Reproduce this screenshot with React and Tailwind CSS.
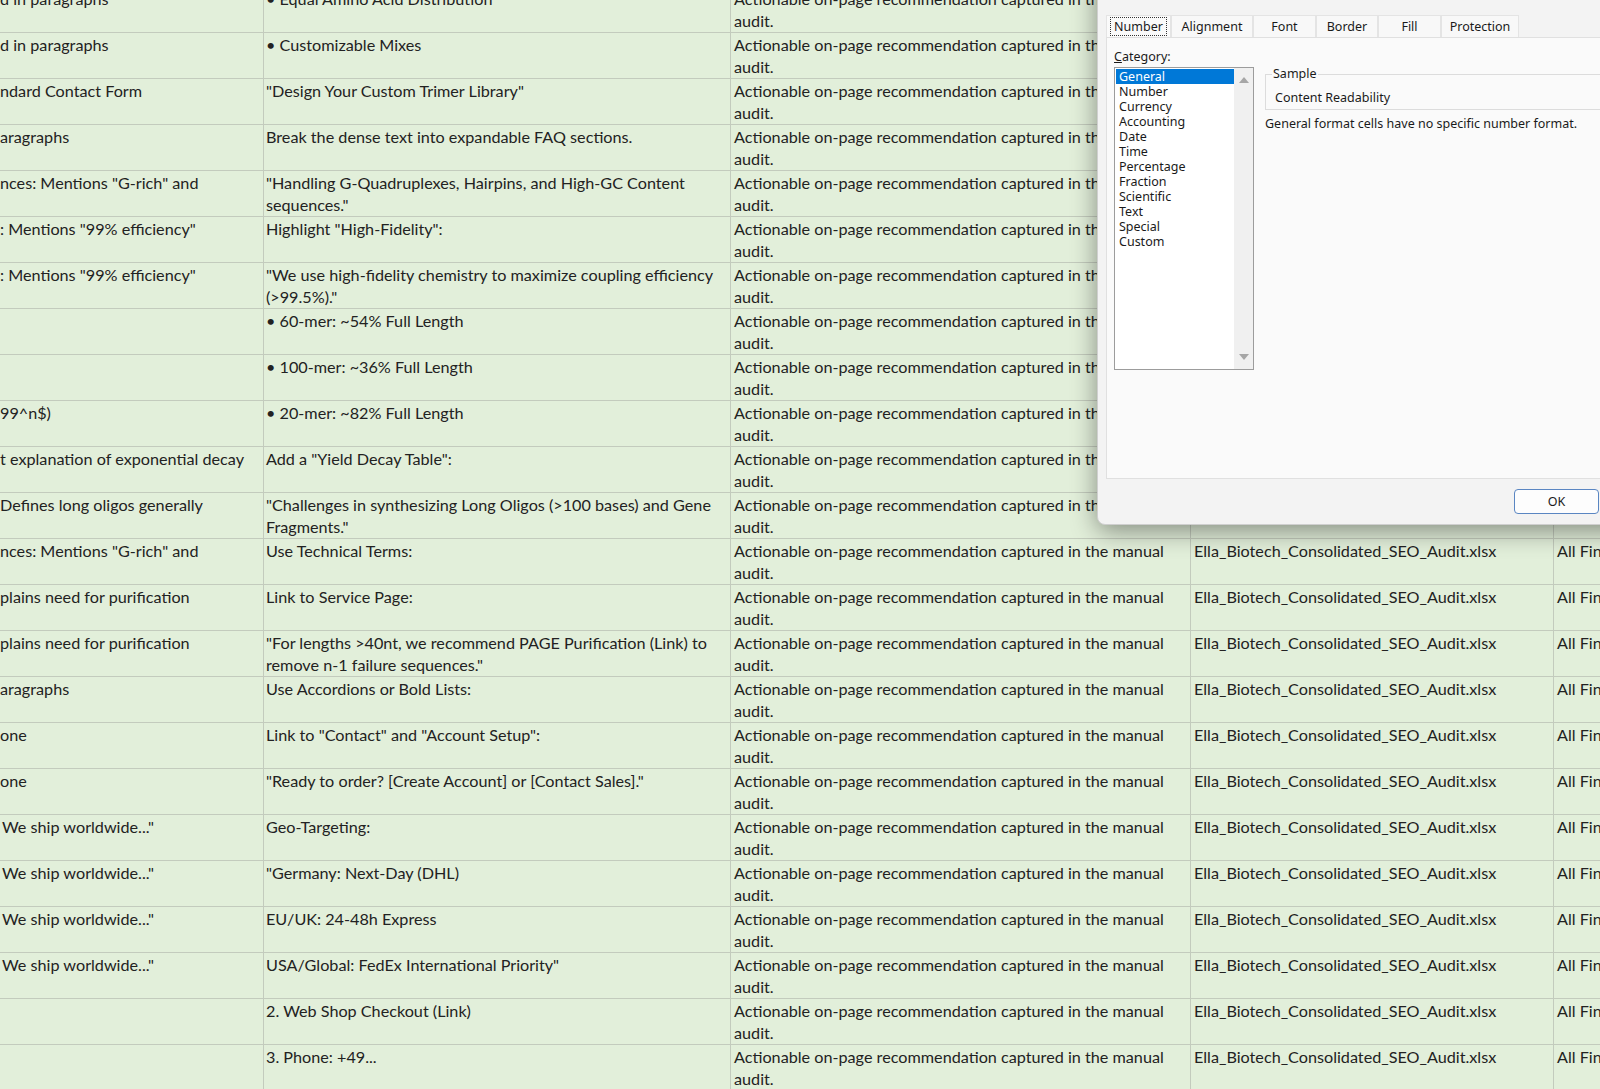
import React from "react";

const C_TEXT = ["Actionable on-page recommendation captured in the manual", "audit."];
const D_TEXT = "Ella_Biotech_Consolidated_SEO_Audit.xlsx";
const E_TEXT = "All Findings";

const rows = [
  { a: "d in paragraphs", b: ["• Equal Amino Acid Distribution"] },
  { a: "d in paragraphs", b: ["• Customizable Mixes"] },
  { a: "ndard Contact Form", b: ['"Design Your Custom Trimer Library"'] },
  { a: "aragraphs", b: ["Break the dense text into expandable FAQ sections."] },
  { a: 'nces: Mentions "G-rich" and', b: ['"Handling G-Quadruplexes, Hairpins, and High-GC Content', 'sequences."'] },
  { a: ': Mentions "99% efficiency"', b: ['Highlight "High-Fidelity":'] },
  { a: ': Mentions "99% efficiency"', b: ['"We use high-fidelity chemistry to maximize coupling efficiency', '(>99.5%)."'] },
  { a: "", b: ["• 60-mer: ~54% Full Length"] },
  { a: "", b: ["• 100-mer: ~36% Full Length"] },
  { a: "99^n$)", b: ["• 20-mer: ~82% Full Length"] },
  { a: "t explanation of exponential decay", b: ['Add a "Yield Decay Table":'] },
  { a: "Defines long oligos generally", b: ['"Challenges in synthesizing Long Oligos (>100 bases) and Gene', 'Fragments."'] },
  { a: 'nces: Mentions "G-rich" and', b: ["Use Technical Terms:"] },
  { a: "plains need for purification", b: ["Link to Service Page:"] },
  { a: "plains need for purification", b: ['"For lengths >40nt, we recommend PAGE Purification (Link) to', 'remove n-1 failure sequences."'] },
  { a: "aragraphs", b: ["Use Accordions or Bold Lists:"] },
  { a: "one", b: ['Link to "Contact" and "Account Setup":'] },
  { a: "one", b: ['"Ready to order? [Create Account] or [Contact Sales]."'] },
  { a: 'We ship worldwide..."', b: ["Geo-Targeting:"], ap: true },
  { a: 'We ship worldwide..."', b: ['"Germany: Next-Day (DHL)'], ap: true },
  { a: 'We ship worldwide..."', b: ["EU/UK: 24-48h Express"], ap: true },
  { a: 'We ship worldwide..."', b: ['USA/Global: FedEx International Priority"'], ap: true },
  { a: "", b: ["2. Web Shop Checkout (Link)"] },
  { a: "", b: ["3. Phone: +49..."] },
];

const categories = [
  "General", "Number", "Currency", "Accounting", "Date", "Time",
  "Percentage", "Fraction", "Scientific", "Text", "Special", "Custom",
];

const tabs = [
  { label: "Number", w: "w-[65px]", active: true },
  { label: "Alignment", w: "w-[82px]" },
  { label: "Font", w: "w-[63px]" },
  { label: "Border", w: "w-[62px]" },
  { label: "Fill", w: "w-[63px]" },
  { label: "Protection", w: "w-[78px]" },
];

function Lines({ lines }) {
  return lines.map((l, i) => (
    <div key={i} className="whitespace-nowrap">{l}</div>
  ));
}

function Row({ r }) {
  return (
    <div className="flex h-[46px] border-b border-[#c3cbbd]">
      <div className={`w-[264px] shrink-0 overflow-hidden border-r border-[#c3cbbd] pt-[1px] whitespace-nowrap ${r.ap ? "pl-[2px]" : "pl-0"}`}>
        {r.a}
      </div>
      <div className="w-[467px] shrink-0 overflow-hidden border-r border-[#c3cbbd] pl-[2px] pt-[1px]">
        <Lines lines={r.b} />
      </div>
      <div className="w-[460px] shrink-0 overflow-hidden border-r border-[#c3cbbd] pl-[3px] pt-[1px]">
        <Lines lines={C_TEXT} />
      </div>
      <div className="w-[363px] shrink-0 overflow-hidden border-r border-[#c3cbbd] pl-[3px] pt-[1px] whitespace-nowrap">
        {D_TEXT}
      </div>
      <div className="w-[200px] shrink-0 overflow-hidden pl-[3px] pt-[1px] whitespace-nowrap">
        {E_TEXT}
      </div>
    </div>
  );
}

function Dialog() {
  return (
    <div className="absolute left-[1097px] top-[-31px] flex w-[604px] flex-col rounded-lg border border-[#cfcfcf] bg-[#f3f3f3] px-[8px] pt-[45px] pb-[10px] font-[family-name:'Noto_Sans',sans-serif] text-[12.5px] text-[#1a1a1a] shadow-[0_6px_26px_rgba(0,0,0,0.42)]">
      <div className="flex h-[22px]">
        {tabs.map((t) => (
          <div
            key={t.label}
            className={`${t.w} flex items-center justify-center border border-b-0 border-[#e4e4e4] ${t.active ? "bg-[#fafafa]" : "bg-[#f8f8f8]"}`}
          >
            {t.active ? (
              <span className="border border-dotted border-[#333] px-[3px] leading-[17px]">{t.label}</span>
            ) : (
              <span className="leading-[17px]">{t.label}</span>
            )}
          </div>
        ))}
      </div>
      <div className="flex h-[442px] border border-[#e0e0e0] bg-[#fafafa]">
        <div className="flex flex-col pl-[7px] pt-[10px]">
          <div className="leading-[18px]">
            <span className="underline">C</span>ategory:
          </div>
          <div className="mt-[1px] flex h-[303px] w-[140px] border border-[#9c9c9c] bg-white">
            <div className="flex flex-1 flex-col pl-[1px] pt-[1px]">
              {categories.map((c, i) => (
                <div
                  key={c}
                  className={`h-[15px] pl-[3px] leading-[15px] ${i === 0 ? "bg-[#0078d7] text-white" : ""}`}
                >
                  {c}
                </div>
              ))}
            </div>
            <div className="flex w-[19px] flex-col items-center justify-between bg-[#f0f0f0] py-[9px]">
              <svg width="10" height="6" viewBox="0 0 10 6">
                <path d="M0 6 L5 0 L10 6 Z" fill="#a6a6a6" />
              </svg>
              <svg width="10" height="6" viewBox="0 0 10 6">
                <path d="M0 0 L5 6 L10 0 Z" fill="#a6a6a6" />
              </svg>
            </div>
          </div>
        </div>
        <div className="ml-[11px] flex flex-col">
          <div className="relative mt-[36px] h-[36px] w-[420px] border border-[#dcdcdc] pl-[9px] pt-[14px] leading-[18px]">
            <span className="absolute left-[6px] top-[-10px] bg-[#fafafa] px-[1px] leading-[18px]">Sample</span>
            Content Readability
          </div>
          <div className="mt-[5px] leading-[18px]">General format cells have no specific number format.</div>
        </div>
      </div>
      <div className="mt-[10px] flex justify-end gap-[8px]">
        <div className="flex h-[25px] w-[85px] items-center justify-center rounded-[4px] border border-[#5a86c2] bg-[#fdfdfd]">OK</div>
        <div className="flex h-[25px] w-[85px] items-center justify-center rounded-[4px] border border-[#c8c8c8] bg-[#fdfdfd]">Cancel</div>
      </div>
    </div>
  );
}

export default function App() {
  return (
    <div className="relative h-[1089px] w-[1600px] overflow-hidden bg-[#e2efda] font-[family-name:Lato,sans-serif] text-[16.2px] leading-[22px] text-[#222]">
      <div className="mt-[-13px]">
        {rows.map((r, i) => (
          <Row key={i} r={r} />
        ))}
      </div>
      <Dialog />
    </div>
  );
}
